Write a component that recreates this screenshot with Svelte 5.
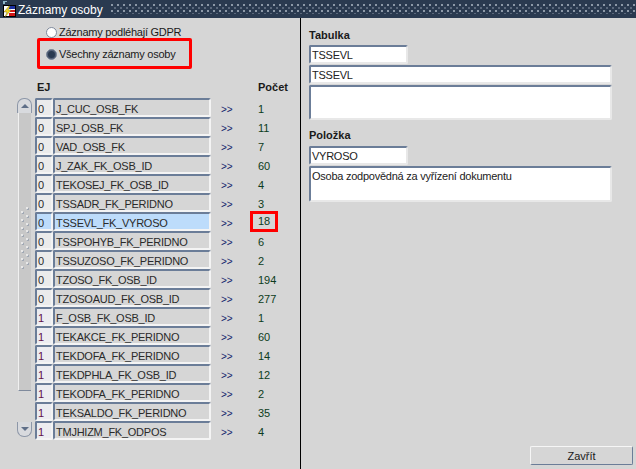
<script lang="ts">
  const rows = [
    { ej: '0', name: 'J_CUC_OSB_FK', count: 1 },
    { ej: '0', name: 'SPJ_OSB_FK', count: 11 },
    { ej: '0', name: 'VAD_OSB_FK', count: 7 },
    { ej: '0', name: 'J_ZAK_FK_OSB_ID', count: 60 },
    { ej: '0', name: 'TEKOSEJ_FK_OSB_ID', count: 4 },
    { ej: '0', name: 'TSSADR_FK_PERIDNO', count: 3 },
    { ej: '0', name: 'TSSEVL_FK_VYROSO', count: 18, active: true },
    { ej: '0', name: 'TSSPOHYB_FK_PERIDNO', count: 6 },
    { ej: '0', name: 'TSSUZOSO_FK_PERIDNO', count: 2 },
    { ej: '0', name: 'TZOSO_FK_OSB_ID', count: 194 },
    { ej: '0', name: 'TZOSOAUD_FK_OSB_ID', count: 277 },
    { ej: '1', name: 'F_OSB_FK_OSB_ID', count: 1 },
    { ej: '1', name: 'TEKAKCE_FK_PERIDNO', count: 60 },
    { ej: '1', name: 'TEKDOFA_FK_PERIDNO', count: 14 },
    { ej: '1', name: 'TEKDPHLA_FK_OSB_ID', count: 12 },
    { ej: '1', name: 'TEKODFA_FK_PERIDNO', count: 2 },
    { ej: '1', name: 'TEKSALDO_FK_PERIDNO', count: 35 },
    { ej: '1', name: 'TMJHIZM_FK_ODPOS', count: 4 },
  ];
  const grip = Array.from({ length: 8 });
</script>

<div class="window">
  <div class="titlebar">
    <svg class="logo" width="18" height="18" viewBox="0 0 18 18">
      <path d="M3 1h4v1H5v2H3z" fill="#8fb7c8" />
      <rect x="3.5" y="5.5" width="12" height="11" fill="#fff" stroke="#000" />
      <rect x="9" y="6" width="6" height="3" fill="#1a2fa0" />
      <rect x="10" y="10" width="5" height="2" fill="#d01818" />
      <rect x="9" y="13" width="6" height="3" fill="#d01818" />
      <path d="M9 6 4 12h3l-2 5 6-7H8l2-4z" fill="#f4d820" stroke="#6a5a10" stroke-width=".4" />
    </svg>
    <span class="title">Záznamy osoby</span>
    <span class="pattern"></span>
  </div>

  <div class="body">
    <div class="left">
      <div class="radios">
        <label class="radio"><span class="knob"></span>Záznamy podléhají GDPR</label>
        <label class="radio marked"><span class="knob on"></span>Všechny záznamy osoby</label>
      </div>

      <div class="heads">
        <span>EJ</span>
        <span>Počet</span>
      </div>

      <div class="list">
        <div class="scroll">
          <div class="btn up"><i></i></div>
          <div class="thumb">
            <div class="grip">
              <div class="grip-col offset">
                {#each grip as _}<b></b>{/each}
              </div>
              <div class="grip-col">
                {#each grip as _}<b></b>{/each}
              </div>
            </div>
          </div>
          <div class="track"></div>
          <div class="btn down"><i></i></div>
        </div>
        <div class="rows">
          {#each rows as r}
            <div class="row">
              <span class="field ej" class:one={r.ej === '1'} class:active={r.active}>{r.ej}</span>
              <span class="field name" class:active={r.active}>{r.name}</span>
              <span class="go">&gt;&gt;</span>
              <span class="count" class:marked={r.active}>{r.count}</span>
            </div>
          {/each}
        </div>
      </div>
    </div>

    <div class="right">
      <div class="label">Tabulka</div>
      <div class="input short">TSSEVL</div>
      <div class="input long">TSSEVL</div>
      <div class="input area"></div>
      <div class="label second">Položka</div>
      <div class="input short">VYROSO</div>
      <div class="input area tall">Osoba zodpovědná za vyřízení dokumentu</div>
      <div class="spacer"></div>
      <button class="close">Zavřít</button>
    </div>
  </div>
</div>

<style>
  :global(body) {
    margin: 0;
    background: #d6d6d6;
  }

  .window {
    width: 636px;
    height: 469px;
    display: flex;
    flex-direction: column;
    font-family: 'Liberation Sans', Arial, sans-serif;
    font-size: 11px;
    letter-spacing: -0.25px;
    color: #000;
    background: #d6d6d6;
    overflow: hidden;
  }

  .titlebar {
    height: 18px;
    flex: none;
    display: flex;
    align-items: center;
    background: #2a3a50;
    color: #fff;
  }

  .logo {
    flex: none;
  }

  .title {
    font-size: 12px;
    letter-spacing: 0;
    padding-right: 8px;
    padding-top: 1px;
    white-space: nowrap;
  }

  .pattern {
    flex: 1;
    height: 10px;
    background-image:
      radial-gradient(circle at 1px 1px, #8d99a8 0.8px, transparent 1px),
      radial-gradient(circle at 1px 1px, #5a687c 0.8px, transparent 1px);
    background-size: 6px 6px;
    background-position: 0 0, 3px 3px;
  }

  .body {
    flex: 1;
    display: flex;
    min-height: 0;
  }

  .left {
    width: 301px;
    flex: none;
    box-sizing: border-box;
    border-right: 1px solid #000;
  }

  .radios {
    display: flex;
    flex-direction: column;
    align-items: flex-start;
    margin: 6px 0 0 37px;
  }

  .radio {
    display: flex;
    align-items: center;
    white-space: nowrap;
    color: #1a1a1a;
  }

  .radio:first-child {
    padding-left: 9px;
    height: 16px;
    margin-bottom: -2px;
  }

  .radio.marked {
    width: 155px;
    height: 31px;
    box-sizing: border-box;
    border: 3px solid #ff0000;
    border-radius: 2px;
    padding: 1px 0 0 6px;
  }

  .knob {
    width: 11px;
    height: 11px;
    flex: none;
    box-sizing: border-box;
    border-radius: 50%;
    background: #fff;
    border: 1px solid #7f8a9c;
    margin-right: 2px;
  }

  .knob.on {
    background: #2a3a50;
    box-shadow: inset 0 0 0 1px #55627a;
  }

  .heads {
    display: flex;
    justify-content: space-between;
    width: 251px;
    height: 17px;
    margin: 11px 0 0 37px;
    padding-top: 1px;
    font-weight: bold;
    letter-spacing: 0;
    color: #1a1a1a;
  }

  .list {
    display: flex;
    margin-left: 17px;
  }

  .scroll {
    width: 15px;
    height: 339px;
    flex: none;
    display: flex;
    flex-direction: column;
    margin-right: 3px;
  }

  .btn {
    height: 15px;
    flex: none;
    box-sizing: border-box;
    display: flex;
    align-items: center;
    justify-content: center;
    background: #d8dade;
    border: 1px solid #8d97a8;
  }

  .btn i {
    width: 0;
    height: 0;
    border-left: 4px solid transparent;
    border-right: 4px solid transparent;
  }

  .btn.up {
    border-bottom: none;
    border-radius: 7px 7px 0 0;
  }

  .btn.up i {
    border-bottom: 4px solid #5f6f88;
  }

  .btn.down {
    border-top: none;
    border-radius: 0 0 7px 7px;
  }

  .btn.down i {
    border-top: 4px solid #5f6f88;
  }

  .thumb {
    height: 278px;
    flex: none;
    box-sizing: border-box;
    margin: 0 1px;
    background: #c8c8c8;
    border-left: 1px solid #f0f0f0;
    border-bottom: 1px solid #7f8a9c;
    position: relative;
  }

  .track {
    flex: 1;
  }

  .grip {
    position: absolute;
    left: 2px;
    top: 94px;
    display: flex;
    gap: 3px;
  }

  .grip-col {
    display: flex;
    flex-direction: column;
    gap: 5.8px;
  }

  .grip-col.offset {
    margin-top: 4px;
  }

  .grip b {
    width: 2px;
    height: 2px;
    background: #e8e8e8;
    box-shadow: 1px 1px 0 #a0a8b4;
  }

  .rows {
    display: flex;
    flex-direction: column;
  }

  .row {
    display: flex;
    align-items: center;
    height: 19px;
  }

  .field {
    height: 19px;
    line-height: 15px;
    box-sizing: border-box;
    border: 2px solid;
    border-color: #6b7d98 #f4f4f4 #f4f4f4 #6b7d98;
    border-radius: 2px;
    padding: 2px 0 0 1px;
    color: #2a2a2a;
  }

  .ej {
    width: 18px;
    background: #ebebeb;
    flex: none;
  }

  .ej.one {
    color: #60104a;
    background: #ececf0;
  }

  .name {
    width: 158px;
    flex: none;
    background: #d6d6d6;
    white-space: nowrap;
    overflow: hidden;
  }

  .field.active {
    background: #bddcfb;
  }

  .go {
    width: 37px;
    margin-left: 10px;
    padding-top: 3px;
    box-sizing: border-box;
    font-size: 10px;
    letter-spacing: 0;
    color: #14246c;
    flex: none;
  }

  .count {
    padding-top: 2px;
    letter-spacing: 0;
    color: #0c3c20;
  }

  .count.marked {
    box-sizing: border-box;
    border: 3px solid #ff0000;
    width: 28px;
    height: 21px;
    line-height: 15px;
    padding: 0 0 0 5px;
    margin-left: -8px;
  }

  .right {
    flex: 1;
    display: flex;
    flex-direction: column;
    align-items: flex-start;
    padding: 8px 0 4px 8px;
    min-width: 0;
  }

  .label {
    font-weight: bold;
    letter-spacing: 0;
    height: 18px;
    line-height: 18px;
    color: #1a1a1a;
    margin-bottom: 1px;
  }

  .label.second {
    margin-top: 6px;
    height: 19px;
    line-height: 18px;
  }

  .input {
    box-sizing: border-box;
    background: #fff;
    border: 2px solid;
    border-color: #6b7d98 #e8e8e8 #e8e8e8 #6b7d98;
    border-radius: 2px;
    padding: 1px 0 0 1px;
    line-height: 15px;
    color: #222;
  }

  .short {
    width: 99px;
    height: 19px;
    margin-bottom: 1px;
  }

  .long {
    width: 303px;
    height: 19px;
    margin-bottom: 1px;
  }

  .area {
    width: 303px;
    height: 35px;
  }

  .area.tall {
    height: 36px;
  }

  .spacer {
    flex: 1;
  }

  .close {
    align-self: flex-end;
    margin-right: 3px;
    width: 103px;
    height: 19px;
    padding: 0;
    box-sizing: border-box;
    background: #d6d6d6;
    border: 1px solid;
    border-color: #f6f6f6 #6b7d98 #6b7d98 #f6f6f6;
    border-radius: 2px;
    font-family: inherit;
    font-size: 11px;
    letter-spacing: 0;
    color: #1a1a1a;
  }
</style>
